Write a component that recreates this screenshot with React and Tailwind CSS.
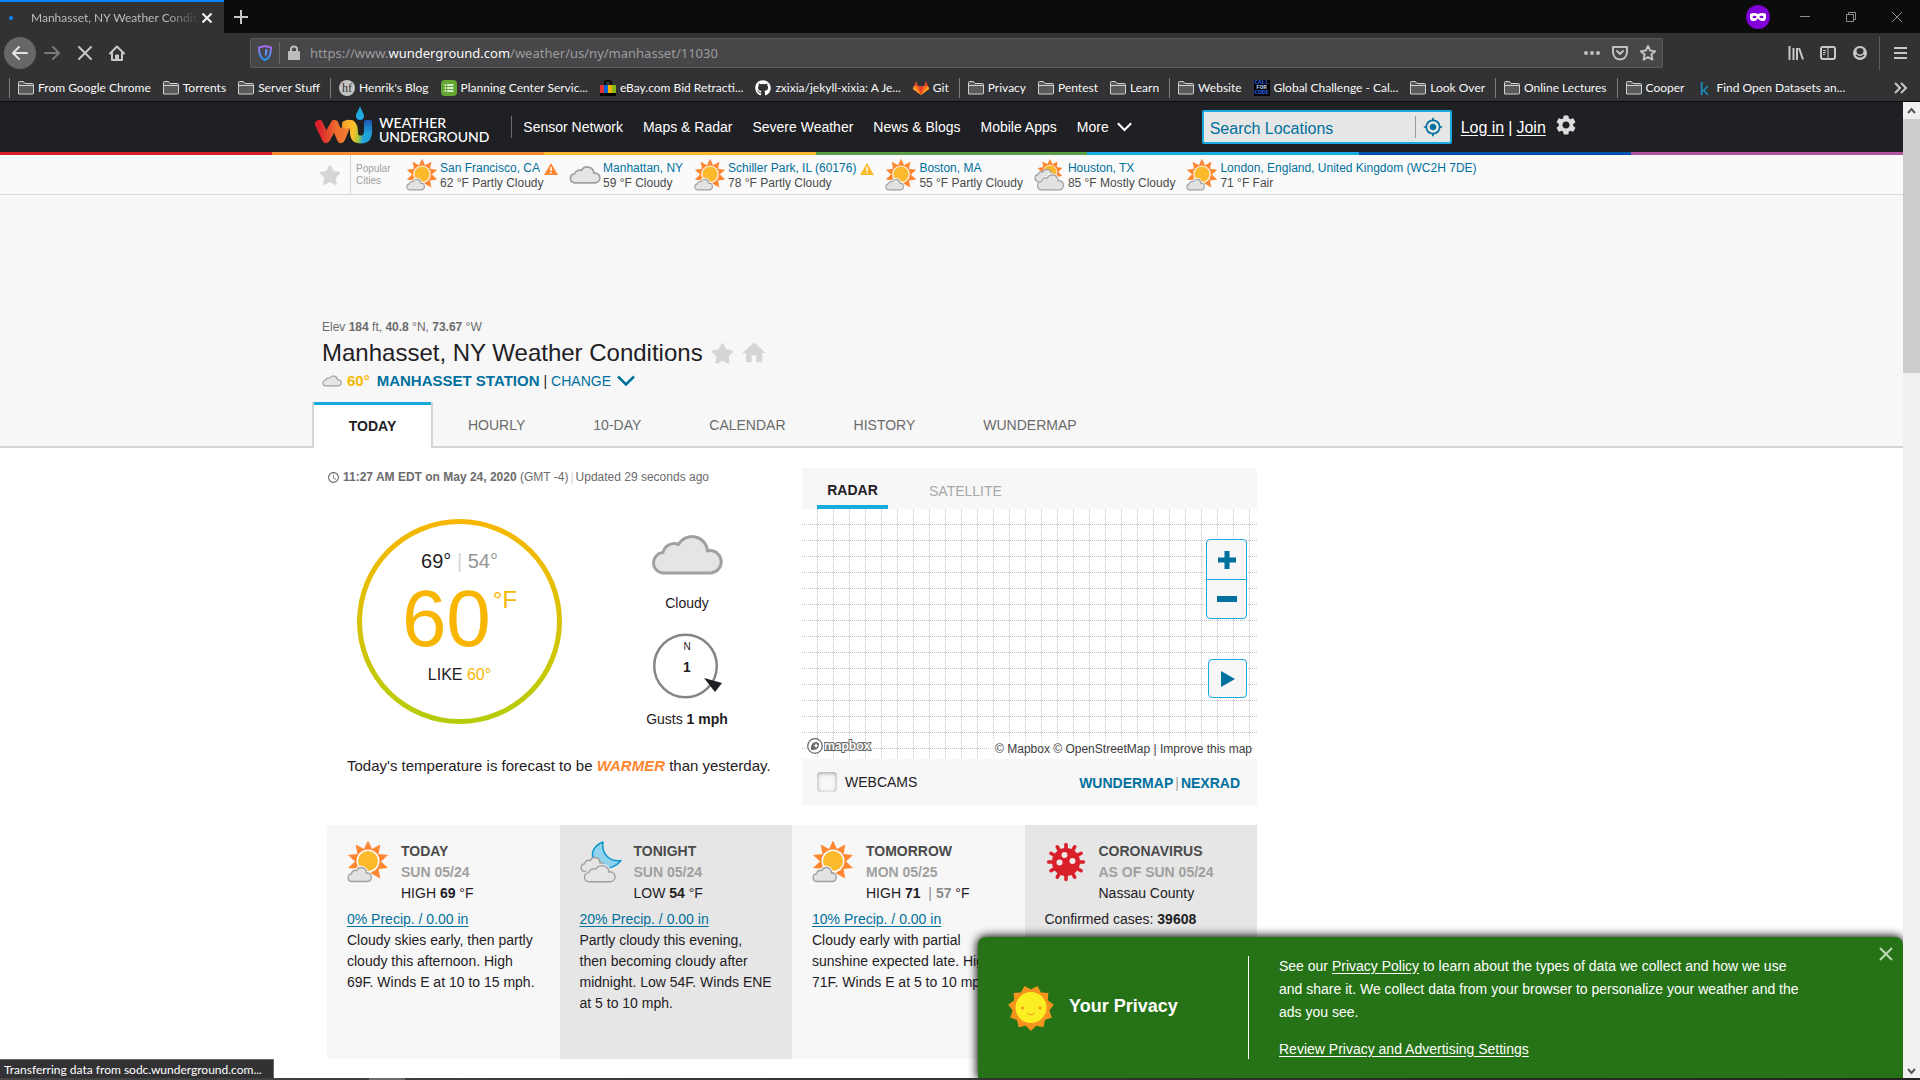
import React from "react";
import { FaGithub, FaStar } from "react-icons/fa6";
import { MdSettings, MdMyLocation, MdAccessTime, MdHome } from "react-icons/md";

function starPoints(cx, cy, n, outer, inner) {
  return Array.from({ length: n * 2 }, (_, i) => {
    const r = i % 2 ? inner : outer;
    const a = (Math.PI * i) / n;
    return `${(cx + r * Math.sin(a)).toFixed(1)},${(cy - r * Math.cos(a)).toFixed(1)}`;
  }).join(" ");
}

const CLOUD =
  "M12.5 38 H61 A11.3 11.3 0 0 0 61 15.5 Q59 15.3 57.5 16 A15.5 15.5 0 0 0 28.5 9.5 A11.5 11.5 0 0 0 13 17.5 A10.3 10.3 0 0 0 12.5 38Z";

function Cloud({ className, stroke = 3 }) {
  return (
    <svg viewBox="0 0 74 40" className={className} aria-hidden="true">
      <path d={CLOUD} fill="#e5e5e5" stroke="#a0a0a0" strokeWidth={stroke} strokeLinejoin="round" />
    </svg>
  );
}

function SmallCloud({ className }) {
  return <Cloud className={className} stroke={4} />;
}

function Chevron({ className }) {
  return (
    <svg viewBox="0 0 18 12" className={className} fill="none" stroke="currentColor" strokeWidth="2.500" aria-hidden="true">
      <path d="M1 1.500 L9 9.500 L17 1.500" />
    </svg>
  );
}

function SunCloud({ className }) {
  return (
    <svg viewBox="0 0 42 42" className={className} aria-hidden="true">
      <polygon points={starPoints(21, 20.5, 10, 21, 13)} fill="#ff8732" />
      <circle cx="21" cy="20" r="11.500" fill="#fafafa" />
      <circle cx="21" cy="20" r="10" fill="#fdb92c" />
      <g transform="translate(0 26) scale(0.34 0.38)">
        <path d={CLOUD} fill="#fafafa" stroke="#fafafa" strokeWidth="10" />
        <path d={CLOUD} fill="#e2e2e2" stroke="#a0a0a0" strokeWidth="4" />
      </g>
    </svg>
  );
}

function MostlyCloudy({ className }) {
  return (
    <svg viewBox="0 0 42 42" className={className} aria-hidden="true">
      <g transform="translate(3 0)">
        <polygon points={starPoints(18, 17, 10, 17, 11)} fill="#ff8732" />
        <circle cx="18" cy="17" r="9" fill="#fdb92c" stroke="#fafafa" />
      </g>
      <g transform="translate(0 13) scale(0.4 0.43)">
        <path d={CLOUD} fill="#e2e2e2" stroke="#a0a0a0" strokeWidth="4" />
      </g>
      <g transform="translate(3 20) scale(0.5 0.54)">
        <path d={CLOUD} fill="#e2e2e2" stroke="#fafafa" strokeWidth="7" />
        <path d={CLOUD} fill="#e2e2e2" stroke="#a0a0a0" strokeWidth="3" />
      </g>
    </svg>
  );
}

function NightCloud({ className }) {
  return (
    <svg viewBox="0 0 42 42" className={className} aria-hidden="true">
      <path d="M23 1 C13 5 9 14 16 22 C22 30 34 28 41 19.500 C31 21 21 14 23 1Z" fill="#8fd3ee" stroke="#0a96cc" strokeWidth="1.500" strokeLinejoin="round" />
      <g transform="translate(0 16) scale(0.35 0.38)">
        <path d={CLOUD} fill="#e5e5e5" stroke="#a0a0a0" strokeWidth="4" />
      </g>
      <g transform="translate(3 24) scale(0.45 0.44)">
        <path d={CLOUD} fill="#e5e5e5" stroke="#e5e5e5" strokeWidth="9" />
        <path d={CLOUD} fill="#e5e5e5" stroke="#a0a0a0" strokeWidth="3" />
      </g>
    </svg>
  );
}

function Virus({ className }) {
  return (
    <svg viewBox="0 0 42 42" className={className} aria-hidden="true">
      <g stroke="#d91f2a" strokeWidth="3.600" strokeLinecap="round">
        {Array.from({ length: 12 }, (_, i) => (
          <line key={i} x1="21" y1="21" x2="21" y2="3.600" transform={`rotate(${i * 30} 21 21)`} />
        ))}
      </g>
      <circle cx="21" cy="21" r="14" fill="#d91f2a" />
      <circle cx="19.500" cy="14" r="3" fill="#f2e8e8" />
      <circle cx="14.500" cy="21.500" r="3" fill="#f2e8e8" />
      <circle cx="27.500" cy="20" r="3" fill="#f2e8e8" />
    </svg>
  );
}

function SmilingSun({ className }) {
  return (
    <svg viewBox="0 0 46 46" className={className} aria-hidden="true">
      <g transform="rotate(180 23 23)">
        <polygon points={starPoints(23, 23, 11, 23, 18.5)} fill="#f7941d" />
      </g>
      <circle cx="23" cy="22.500" r="15.500" fill="#fbee23" />
      <circle cx="14.500" cy="23" r="1.500" fill="#f7941d" />
      <circle cx="32" cy="23" r="1.500" fill="#f7941d" />
      <path d="M19 27.500 Q23 32.500 27 27.500" fill="none" stroke="#f7941d" />
    </svg>
  );
}

function Alert({ color }) {
  return (
    <svg viewBox="0 0 14 12" className="mt-0.5 h-3 w-3.5" aria-label="Alert">
      <path d="M7 0 L14 12 H0Z" fill={color} />
      <path d="M7 4 V8 M7 9 V10.500" stroke="#fff" strokeWidth="1.500" />
    </svg>
  );
}

function Logo() {
  return (
    <svg viewBox="0 0 58 38" className="h-[38px] w-[58px]" aria-hidden="true">
      <defs>
        <linearGradient id="w" gradientUnits="userSpaceOnUse" x1="0" y1="0" x2="40" y2="0">
          <stop offset="0.1" stopColor="#d9202b" />
          <stop offset="0.55" stopColor="#ef6f2f" />
          <stop offset="1" stopColor="#f3872f" />
        </linearGradient>
        <linearGradient id="u" gradientUnits="userSpaceOnUse" x1="28" y1="20" x2="55" y2="24">
          <stop offset="0" stopColor="#f6a02c" />
          <stop offset="0.4" stopColor="#fdc22c" />
          <stop offset="0.62" stopColor="#a9c53a" />
          <stop offset="0.8" stopColor="#1fa3d8" />
        </linearGradient>
        <linearGradient id="b" x1="0" y1="0" x2="0" y2="1">
          <stop offset="0" stopColor="#1d57b0" />
          <stop offset="1" stopColor="#1d9fdb" />
        </linearGradient>
      </defs>
      <path d="M4 18 L11 33 L19.500 18 L26 33 L31 21 Q32.500 17.500 36 18" fill="none" stroke="url(#w)" strokeWidth="8" strokeLinejoin="round" strokeLinecap="round" />
      <path d="M31 18.500 Q39 15.500 39 26 Q39 33.500 46 33.500 Q53 33.500 53 25" fill="none" stroke="url(#u)" strokeWidth="8" strokeLinecap="round" />
      <path d="M49 16 Q49 14 51 14 H55 Q57 14 57 16 V27 H49Z" fill="url(#b)" />
      <path d="M45 0 C46.500 5 49 7 49 10 A4 4 0 0 1 41 10 C41 7 43.500 5 45 0Z" fill="#1fabe0" />
    </svg>
  );
}

function FolderIcon() {
  return (
    <svg viewBox="0 0 16 16" className="size-4 shrink-0" fill="none" stroke="#cfcfd0" aria-hidden="true">
      <path d="M0.500 14 V2.500 Q0.500 1.500 1.500 1.500 H5.500 L7 3.500 H14.500 Q15.500 3.500 15.500 4.500 V13 Q15.500 14 14.500 14Z M0.500 5.500 H15.500" fill="#5a5a5c" />
    </svg>
  );
}

function HenrikIcon() {
  return (
    <span className="flex size-4 shrink-0 items-center justify-center rounded-full bg-[#c4c4c4] font-['Liberation_Serif',serif] text-xs leading-none text-[#333]">hf</span>
  );
}

function PlanningIcon() {
  return (
    <svg viewBox="0 0 16 16" className="size-4 shrink-0" aria-hidden="true">
      <rect width="16" height="16" rx="4" fill="#63a832" />
      <path d="M3.500 5 H5 M6 5 H12.500 M3.500 8 H5 M6 8 H12.500 M3.500 11 H5 M6 11 H12.500" stroke="#fff" strokeWidth="1.500" />
    </svg>
  );
}

function EbayIcon() {
  return (
    <svg viewBox="0 0 16 16" className="size-4 shrink-0" aria-hidden="true">
      <path d="M5 6 V3 Q5 0.500 8 0.500 Q11 0.500 11 3 V6" fill="none" stroke="#000" strokeWidth="1.500" />
      <path d="M0 5 H4 V13 H0Z" fill="#e53238" />
      <path d="M4 5 H8 V13 H4Z" fill="#0064d2" />
      <path d="M8 5 H12 V13 H8Z" fill="#f5af02" />
      <path d="M12 5 H16 V13 H12Z" fill="#86b817" />
      <path d="M0 13 H16 V16 H0Z" fill="#000" />
    </svg>
  );
}

function GithubIcon() {
  return <FaGithub className="size-4 shrink-0 text-white" />;
}

function GitlabIcon() {
  return (
    <svg viewBox="0 0 16 16" className="size-4 shrink-0" aria-hidden="true">
      <path d="M8 15 L0 9 L1 6 H15 L16 9Z" fill="#fc6d26" />
      <path d="M8 15 L5 6 H11Z" fill="#e24329" />
      <path d="M1 6 L3 1 L5 6Z M15 6 L13 1 L11 6Z" fill="#e24329" />
      <path d="M0 9 L1 6 L8 15Z M16 9 L15 6 L8 15Z" fill="#fca326" />
    </svg>
  );
}

function CallIcon() {
  return (
    <span className="flex size-4 shrink-0 flex-col items-center justify-center bg-black font-['Liberation_Mono',monospace] text-[6px] leading-[5px] font-bold text-[#2a62e0]">
      <span>CALL</span>
      <span className="text-[#b8c8e8]">FOR</span>
      <span>CODE</span>
    </span>
  );
}

function KaggleIcon() {
  return <span className="w-4 shrink-0 text-center text-lg leading-none font-medium text-[#1a8ab8]">k</span>;
}

const BOOKMARKS = [
  [[FolderIcon, "From Google Chrome"], [FolderIcon, "Torrents"], [FolderIcon, "Server Stuff"]],
  [
    [HenrikIcon, "Henrik's Blog"],
    [PlanningIcon, "Planning Center Servic..."],
    [EbayIcon, "eBay.com Bid Retracti..."],
    [GithubIcon, "zxixia/jekyll-xixia: A Je..."],
    [GitlabIcon, "Git"],
  ],
  [[FolderIcon, "Privacy"], [FolderIcon, "Pentest"], [FolderIcon, "Learn"]],
  [[FolderIcon, "Website"], [CallIcon, "Global Challenge - Cal..."], [FolderIcon, "Look Over"]],
  [[FolderIcon, "Online Lectures"]],
  [[FolderIcon, "Cooper"], [KaggleIcon, "Find Open Datasets an..."]],
];

function BrowserChrome() {
  return (
    <header className="shrink-0 font-[Lato,'Open_Sans',sans-serif] text-xs text-[#f9f9fa]">
      <div className="flex h-[33px] bg-[#0c0c0d]">
        <div className="flex w-56 items-center border-t-2 border-[#0a84ff] bg-[#323234] pr-3 pl-[9px]">
          <span className="size-1 rounded-full bg-[#0a84ff]" />
          <span className="ml-[18px] flex-1 bg-linear-to-r from-[#c4c4c6] from-80% to-[#3c3c3e] bg-clip-text whitespace-nowrap text-transparent">
            Manhasset, NY Weather Condit
          </span>
          <button aria-label="Close tab" className="ml-1">
            <svg viewBox="0 0 10 10" className="size-2.5" stroke="currentColor" strokeWidth="2"><path d="M0.500 0.500 L9.500 9.500 M9.500 0.500 L0.500 9.500" /></svg>
          </button>
        </div>
        <button aria-label="New tab" className="ml-2.5 text-[#c8c8c9]">
          <svg viewBox="0 0 14 14" className="size-3.5" stroke="currentColor" strokeWidth="2" aria-hidden="true">
            <path d="M7 0 V14 M0 7 H14" />
          </svg>
        </button>
        <div className="ml-auto flex items-center text-[#8c8c8c]">
          <svg viewBox="0 0 24 24" className="mr-3 size-6" aria-label="Private browsing">
            <circle cx="12" cy="12" r="12" fill="#8000d7" />
            <path d="M4 9 Q8 7 12 9 Q16 7 20 9 Q21 17 16 16 Q14 16 12 13.500 Q10 16 8 16 Q3 17 4 9Z" fill="#fff" />
            <ellipse cx="8.500" cy="12" rx="2" ry="1.300" fill="#8000d7" />
            <ellipse cx="15.500" cy="12" rx="2" ry="1.300" fill="#8000d7" />
          </svg>
          <button aria-label="Minimize" className="flex w-[46px] justify-center">
            <svg viewBox="0 0 10 10" className="size-2.5" stroke="currentColor"><path d="M0 4.500 H10" /></svg>
          </button>
          <button aria-label="Restore" className="flex w-[46px] justify-center">
            <svg viewBox="0 0 10 10" className="size-2.5" stroke="currentColor" fill="none"><path d="M0.500 2.500 H7.500 V9.500 H0.500Z M2.500 2.500 V0.500 H9.500 V7.500 H7.500" /></svg>
          </button>
          <button aria-label="Close" className="flex w-[46px] justify-center">
            <svg viewBox="0 0 10 10" className="size-2.5" stroke="currentColor"><path d="M0 0 L10 10 M10 0 L0 10" /></svg>
          </button>
        </div>
      </div>

      <div className="flex h-10 items-center bg-[#323234] pr-3 pl-1">
        <button aria-label="Back" className="flex size-8 items-center justify-center rounded-full bg-[#676768]">
          <svg viewBox="0 0 16 16" className="size-4" fill="none" stroke="#e4e4e5" strokeWidth="2" strokeLinecap="round" strokeLinejoin="round"><path d="M15 8 H1.500 M7 2 L1 8 L7 14" /></svg>
        </button>
        <button aria-label="Forward" className="ml-2">
          <svg viewBox="0 0 16 16" className="size-4" fill="none" stroke="#7a7a7c" strokeWidth="2" strokeLinecap="round" strokeLinejoin="round"><path d="M1 8 H14.500 M9 2 L15 8 L9 14" /></svg>
        </button>
        <button aria-label="Stop" className="ml-[17px]">
          <svg viewBox="0 0 16 16" className="size-4" stroke="#c8c8c9" strokeWidth="2" strokeLinecap="round"><path d="M2 2 L14 14 M14 2 L2 14" /></svg>
        </button>
        <button aria-label="Home" className="ml-4">
          <svg viewBox="0 0 16 16" className="size-4" fill="none" stroke="#c8c8c9" strokeWidth="2" strokeLinejoin="round" strokeLinecap="round"><path d="M1 8.500 L8 1.500 L15 8.500 M3 8 V15 H13 V8 M7 15 V10.500 H9 V15" /></svg>
        </button>
        <div className="ml-[125px] flex h-[30px] flex-1 items-center rounded-xs border border-[#5a5a5c] bg-[#474749] pr-1.5 pl-[7px]">
          <svg viewBox="0 0 14 16" className="h-4 w-3.5" fill="none" aria-label="Tracking protection">
            <defs>
              <linearGradient id="shield" x1="0" y1="0" x2="0" y2="1">
                <stop offset="0" stopColor="#a96bf0" />
                <stop offset="1" stopColor="#1f9bf5" />
              </linearGradient>
            </defs>
            <path d="M7 1 L13 2.500 Q13 13 7 15 Q1 13 1 2.500Z" stroke="url(#shield)" strokeWidth="2" />
            <path d="M7 4 L9.500 4.500 Q9.500 10 7 12Z" fill="#5b8cf5" />
          </svg>
          <span className="ml-[7px] h-[22px] w-px bg-[#6a6a6c]" />
          <svg viewBox="0 0 12 16" className="ml-2 h-4 w-3" aria-label="Secure"><rect x="0" y="6" width="12" height="9" rx="1" fill="#bdbdbe" /><path d="M3 7 V4 Q3 1.500 6 1.500 Q9 1.500 9 4 V7" fill="none" stroke="#bdbdbe" strokeWidth="2" /></svg>
          <div role="textbox" aria-label="Address" className="ml-2.5 pt-0.5 font-['Noto_Sans',sans-serif] text-[13px] text-[#9c9c9e]">
            https://www.<span className="text-[#f9f9fa]">wunderground.com</span>/weather/us/ny/manhasset/11030
          </div>
          <div className="ml-auto flex items-center gap-3 text-[#c0c0c1]">
            <svg viewBox="0 0 16 16" className="size-4" fill="currentColor"><circle cx="2" cy="8" r="2" /><circle cx="8" cy="8" r="2" /><circle cx="14" cy="8" r="2" /></svg>
            <svg viewBox="0 0 16 16" className="size-4" fill="none" stroke="currentColor" strokeWidth="2" strokeLinejoin="round" strokeLinecap="round"><path d="M1 2 H15 V7 Q14.500 14 8 14.500 Q1.500 14 1 7Z M5 6 L8 9 L11 6" /></svg>
            <svg viewBox="0 0 16 16" className="size-4" fill="none" stroke="currentColor" strokeWidth="2" strokeLinejoin="round"><polygon points={starPoints(8, 8.5, 5, 7.5, 3.6)} /></svg>
          </div>
        </div>
        <div className="ml-[125px] flex items-center text-[#c8c8c9]">
          <svg viewBox="0 0 16 16" className="size-4" fill="none" stroke="currentColor" strokeWidth="2"><path d="M1.500 1 V15 M5.500 3 V15 M9 3 V15 M11 3 L15 14.500" /></svg>
          <svg viewBox="0 0 16 16" className="ml-4 size-4" fill="none" stroke="currentColor"><rect x="1" y="2" width="14" height="12" rx="2" strokeWidth="2" /><path d="M8 2 V14 M3 5.500 H6 M3 7.500 H6 M3 9.500 H5" /></svg>
          <svg viewBox="0 0 16 16" className="ml-4 size-4" aria-label="Account">
            <circle cx="8" cy="8" r="7" fill="currentColor" />
            <path d="M4.500 5.500 Q4.500 3 8 3 Q11.500 3 11.500 5.500 Q11.500 9.500 8 9.500 Q4.500 9.500 4.500 5.500Z" fill="#323234" />
            <path d="M4 10 Q8 13.500 12 10" fill="none" stroke="#323234" strokeWidth="1.500" />
          </svg>
          <span className="ml-[11px] h-[34px] w-px bg-[#5c5c5e]" />
          <svg viewBox="0 0 14 14" className="ml-3.5 size-3.5" stroke="currentColor" strokeWidth="2"><path d="M0 2 H13 M0 7 H13 M0 12 H13" /></svg>
        </div>
      </div>

      <nav aria-label="Bookmarks" className="flex h-[29px] items-center border-b border-[#0c0c0d] bg-[#323234] pt-px pr-3 pl-[9px]">
        {BOOKMARKS.map((group, g) => (
          <div key={g} className="flex shrink-0 items-center gap-3 pr-2.5">
            <span className="-mr-1 h-5 w-px bg-[#7c7c7e]" />
            {group.map(([Icon, label]) => (
              <a key={label} href="#" className="flex items-center gap-1 whitespace-nowrap">
                <Icon />
                {label}
              </a>
            ))}
          </div>
        ))}
        <svg viewBox="0 0 14 12" className="ml-auto h-3 w-3.5" fill="none" stroke="#c8c8c9" strokeWidth="2"><path d="M1 1 L6 6 L1 11 M7 1 L12 6 L7 11" /></svg>
      </nav>
    </header>
  );
}

function Rainbow() {
  return (
    <div className="flex h-[3px]">
      <span className="flex-1 bg-[#d91f2a]" />
      <span className="flex-1 bg-[#fb8a32]" />
      <span className="flex-1 bg-[#fdb92c]" />
      <span className="flex-1 bg-[#5b9f49]" />
      <span className="flex-1 bg-[#19abe0]" />
      <span className="flex-1 bg-[#0053ae]" />
      <span className="flex-1 bg-[#b1539e]" />
    </div>
  );
}

function SiteHeader() {
  return (
    <>
      <div className="bg-[#1f2024] text-sm text-white">
        <div className="mx-auto flex h-[50px] max-w-[1275px] items-center">
          <a href="#" className="flex items-end gap-1.5 pb-1 pl-px">
            <Logo />
            <span className="font-[Lato,sans-serif] text-sm leading-[14px] font-medium">
              WEATHER
              <br />
              UNDERGROUND
            </span>
          </a>
          <span className="ml-[22px] h-[22px] w-px bg-[#6d6e71]" />
          <nav className="ml-[11px] flex items-center gap-5">
            {["Sensor Network", "Maps & Radar", "Severe Weather", "News & Blogs", "Mobile Apps"].map((t) => (
              <a key={t} href="#" className="whitespace-nowrap">{t}</a>
            ))}
            <button className="flex items-center gap-2">
              More
              <Chevron className="h-2.5 w-[15px]" />
            </button>
          </nav>
          <form className="ml-[70px] flex h-[34px] w-[250px] items-center rounded-xs border-2 border-[#19abe0] bg-[#e6e6e6] text-[#00709e]">
            <input aria-label="Search Locations" placeholder="Search Locations" className="min-w-0 flex-1 pt-1 pl-1.5 text-base outline-none placeholder:text-[#00709e]" />
            <span className="h-[22px] w-px bg-[#9a9a9a]" />
            <button type="button" aria-label="Use my location" className="mx-[7px]">
              <MdMyLocation className="size-5" />
            </button>
          </form>
          <div className="ml-[9px] flex items-center gap-1 pt-px text-base">
            <a href="#" className="underline underline-offset-2">Log in</a>|
            <a href="#" className="underline underline-offset-2">Join</a>
          </div>
          <button aria-label="Settings" className="ml-2 pb-1 text-[#dcdcdc]">
            <MdSettings className="size-6" />
          </button>
        </div>
      </div>
      <Rainbow />
    </>
  );
}

const CITIES = [
  { name: "San Francisco, CA", cond: "62 °F Partly Cloudy", icon: SunCloud, alert: "#ff8732" },
  { name: "Manhattan, NY", cond: "59 °F Cloudy", icon: SmallCloud },
  { name: "Schiller Park, IL (60176)", cond: "78 °F Partly Cloudy", icon: SunCloud, alert: "#fdb92c" },
  { name: "Boston, MA", cond: "55 °F Partly Cloudy", icon: SunCloud },
  { name: "Houston, TX", cond: "85 °F Mostly Cloudy", icon: MostlyCloudy },
  { name: "London, England, United Kingdom (WC2H 7DE)", cond: "71 °F Fair", icon: SunCloud },
];

function PopularCities() {
  return (
    <div className="border-b border-[#d9d9d9] bg-[#fafafa]">
      <div className="mx-auto flex h-[39px] max-w-[1275px] items-center">
        <FaStar className="mx-[5px] size-[22px] text-[#d5d5d5]" />
        <div className="ml-1 flex h-full w-[50px] items-center border-l border-[#d5d5d5] pl-[5px] text-[10px] leading-3 text-[#a0a0a0]">
          Popular
          <br />
          Cities
        </div>
        <ul className="ml-1.5 flex gap-[11px]">
          {CITIES.map(({ name, cond, icon: Icon, alert }) => (
            <li key={name} className="flex items-center gap-0.5">
              <Icon className="size-8" />
              <div className="pt-0.5 text-xs leading-[15px] whitespace-nowrap text-[#4a4a4a]">
                <div className="flex gap-1">
                  <a href="#" className="text-[#00709e]">{name}</a>
                  {alert && <Alert color={alert} />}
                </div>
                {cond}
              </div>
            </li>
          ))}
        </ul>
      </div>
    </div>
  );
}

function LocationHeader() {
  return (
    <div className="bg-[#f7f7f7] pt-[123px]">
      <div className="mx-auto max-w-[1275px] pl-2">
        <p className="text-xs leading-[18px] text-[#6b6b6b]">
          Elev <b>184</b> ft, <b>40.8</b> °N, <b>73.67</b> °W
        </p>
        <h1 className="mt-px flex items-center text-2xl leading-8 text-[#1f2024]">
          Manhasset, NY Weather Conditions
          <FaStar className="ml-2 size-[23px] text-[#d5d5d5]" />
          <MdHome className="ml-1.5 size-7 text-[#d5d5d5]" />
        </h1>
        <div className="mt-0.5 flex items-center text-sm leading-5 text-[#00709e]">
          <SmallCloud className="h-3 w-5" />
          <b className="ml-[5px] text-[15px] text-[#f5b800]">60°</b>
          <a href="#" className="ml-[7px] text-[15px] font-bold">MANHASSET STATION</a>
          <span className="mx-1 text-[#1f2024]">|</span>
          <button className="flex items-center gap-1.5">
            CHANGE
            <Chevron className="h-3 w-[18px]" />
          </button>
        </div>
      </div>
      <div className="mt-[11px] flex">
        <span className="flex-1 border-b-2 border-[#d5d5d5]" />
        <nav className="flex w-full max-w-[1279px] text-sm leading-[42px] text-[#6b6b6b]">
          <a href="#" className="w-[121px] border-x-2 border-[#d5d5d5] bg-white text-center font-bold text-[#1f2024]">
            <span className="block border-t-3 border-[#19abe0]">TODAY</span>
          </a>
          <div className="flex flex-1 border-b-2 border-[#d5d5d5] pl-px">
            {["HOURLY", "10-DAY", "CALENDAR", "HISTORY", "WUNDERMAP"].map((t) => (
              <a key={t} href="#" className="px-[34px] pt-0.5">{t}</a>
            ))}
          </div>
        </nav>
        <span className="flex-1 border-b-2 border-[#d5d5d5]" />
      </div>
    </div>
  );
}

function Conditions() {
  return (
    <section className="w-[475px] shrink-0 text-sm text-[#1f2024]">
      <p className="flex items-center text-xs leading-[18px] whitespace-pre text-[#6b6b6b]">
        <MdAccessTime className="mr-[3px] size-[13px]" />
        <b>11:27 AM EDT on May 24, 2020</b> (GMT -4)<span className="mx-0.5 text-[#d5d5d5]">|</span>Updated 29 seconds ago
      </p>
      <div className="mt-[33px] flex pl-[30px]">
        <div className="size-[205px] rounded-full bg-linear-to-b from-[#f8b600] to-[#b4cc08] p-[5px]">
          <div className="flex h-full flex-col items-center rounded-full bg-white pt-[25px]">
            <div className="text-xl leading-6">
              69° <span className="text-[#d5d5d5]">|</span> <span className="text-[#959595]">54°</span>
            </div>
            <div className="mt-1.5 flex gap-0.5 text-[#f8b600]">
              <span className="text-[80px] leading-[80px]">60</span>
              <span className="pt-[9px] text-2xl leading-6">°F</span>
            </div>
            <div className="mt-1.5 text-base leading-5">
              LIKE <span className="text-[#f8b600]">60°</span>
            </div>
          </div>
        </div>
        <div className="ml-[70px] flex w-[110px] flex-col items-center pt-4 leading-5">
          <Cloud className="h-10 w-[74px]" />
          <span className="mt-[18px]">Cloudy</span>
          <svg viewBox="0 0 72 68" className="mt-5 h-[68px] w-[72px]" aria-label="Wind from the southeast">
            <circle cx="34.500" cy="33" r="31.300" fill="none" stroke="#858585" strokeWidth="2.500" />
            <text x="36" y="17" textAnchor="middle" fontSize="10" fill="#1f2024">N</text>
            <text x="36" y="39" textAnchor="middle" fontSize="14" fontWeight="bold" fill="#1f2024">1</text>
            <polygon points="53,45 71,50 64,59" fill="#1f2024" />
          </svg>
          <span className="mt-2">
            Gusts <b>1 mph</b>
          </span>
        </div>
      </div>
      <p className="mt-[27px] pl-5 text-[15px] leading-5">
        Today's temperature is forecast to be <b className="text-[#ff8732] italic">WARMER</b> than yesterday.
      </p>
    </section>
  );
}

function RadarPanel() {
  return (
    <section className="flex flex-1 flex-col bg-[#f7f7f7] text-sm">
      <div className="flex h-[41px] items-stretch pl-[15px]">
        <button className="w-[71px] border-b-4 border-[#19abe0] pt-1.5 font-bold text-[#1f2024]">RADAR</button>
        <button className="ml-[41px] pt-1 text-[#a8a8a8]">SATELLITE</button>
      </div>
      <div className="relative h-[250px] bg-white">
        <svg className="absolute inset-0 size-full" shapeRendering="crispEdges" aria-hidden="true">
          <defs>
            <pattern id="grid" width="16" height="16" patternUnits="userSpaceOnUse">
              <path d="M15.500 0 V16 M0 15.500 H16" stroke="#bfc3c8" strokeDasharray="1 1" />
            </pattern>
          </defs>
          <rect width="100%" height="100%" fill="url(#grid)" />
        </svg>
        <div className="absolute top-[30px] right-2.5 flex flex-col items-end">
          <div className="flex flex-col rounded-sm border border-[#19abe0] bg-[#f7f7f7]/95">
            <button aria-label="Zoom in" className="flex h-10 w-[39px] items-center justify-center border-b border-[#19abe0]">
              <svg viewBox="0 0 18 18" className="size-[18px]" stroke="#00709e" strokeWidth="5"><path d="M9 0 V18 M0 9 H18" /></svg>
            </button>
            <button aria-label="Zoom out" className="flex h-[38px] w-[39px] items-center justify-center">
              <svg viewBox="0 0 20 6" className="h-1.5 w-5" fill="#00709e"><rect width="20" height="6" /></svg>
            </button>
          </div>
          <button aria-label="Play" className="mt-10 flex size-[39px] items-center justify-center rounded-sm border border-[#19abe0] bg-[#f7f7f7]/95">
            <svg viewBox="0 0 14 16" className="h-4 w-3.5" fill="#00709e"><path d="M0 0 L14 8 L0 16Z" /></svg>
          </button>
        </div>
        <a href="#" className="absolute bottom-[5px] left-[5px] flex items-center gap-px">
          <svg viewBox="0 0 16 16" className="size-4" aria-hidden="true">
            <circle cx="8" cy="8" r="7.300" fill="#fff" stroke="#666" strokeWidth="1.200" />
            <path d="M4 12 Q3.500 4 9 4 Q12.500 4 12 7.500 Q11 12.500 4 12Z" fill="#666" />
            <path d="M9 5 L10 7 L11.500 7.500 L10 8.500 L9 10 L8 8.500 L6.500 7.500 L8 7Z" fill="#fff" />
          </svg>
          <svg viewBox="0 0 50 16" className="h-4 w-[50px]" aria-label="mapbox">
            <text x="0" y="12" fontSize="13" fontWeight="bold" fill="#fff" stroke="#666" strokeWidth="2" paintOrder="stroke" fontFamily="Lato, sans-serif">mapbox</text>
          </svg>
        </a>
        <div className="absolute right-0 bottom-0 bg-white/50 px-[5px] text-xs leading-5 text-[#404040]">
          <a href="#">© Mapbox</a> <a href="#">© OpenStreetMap</a> | <a href="#">Improve this map</a>
        </div>
      </div>
      <div className="flex h-[46px] items-center px-[15px]">
        <label className="flex items-center gap-2 text-[#1f2024]">
          <input type="checkbox" className="size-5 appearance-none rounded-sm bg-[#f7f7f7] shadow-[inset_0_1px_4px_#999]" />
          WEBCAMS
        </label>
        <div className="ml-auto flex gap-0.5 pt-0.5 pr-0.5 font-bold text-[#00709e]">
          <a href="#">WUNDERMAP</a>
          <span className="font-normal text-[#a0a0a0]">|</span>
          <a href="#">NEXRAD</a>
        </div>
      </div>
    </section>
  );
}

function Card({ icon: Icon, title, date, temp, tone, children }) {
  return (
    <article className={tone + " flex-1 px-5 pt-4 text-sm leading-[21px] text-[#1f2024]"}>
      <div className="flex gap-3">
        <Icon className="size-[42px] shrink-0" />
        <div className="whitespace-nowrap">
          <h2 className="font-bold text-[#4a4a4a]">{title}</h2>
          <p className="font-bold text-[#a0a0a0]">{date}</p>
          <p>{temp}</p>
        </div>
      </div>
      <div className="mt-[5px]">{children}</div>
    </article>
  );
}

function Forecast() {
  return (
    <section className="mt-5 flex min-h-[234px] w-[930px]">
      <Card icon={SunCloud} tone="bg-[#f7f7f7]" title="TODAY" date="SUN 05/24" temp={<>HIGH <b>69</b> °F</>}>
        <a href="#" className="text-[#00709e] underline underline-offset-2">0% Precip. / 0.00 in</a>
        <p>Cloudy skies early, then partly cloudy this afternoon. High 69F. Winds E at 10 to 15 mph.</p>
      </Card>
      <Card icon={NightCloud} tone="bg-[#e6e6e6]" title="TONIGHT" date="SUN 05/24" temp={<>LOW <b>54</b> °F</>}>
        <a href="#" className="text-[#00709e] underline underline-offset-2">20% Precip. / 0.00 in</a>
        <p>Partly cloudy this evening, then becoming cloudy after midnight. Low 54F. Winds ENE at 5 to 10 mph.</p>
      </Card>
      <Card icon={SunCloud} tone="bg-[#f7f7f7]" title="TOMORROW" date="MON 05/25" temp={<>HIGH <b>71</b> <span className="ml-1 text-[#8c8c8c]">| <b>57</b></span> °F</>}>
        <a href="#" className="text-[#00709e] underline underline-offset-2">10% Precip. / 0.00 in</a>
        <p>Cloudy early with partial sunshine expected late. High 71F. Winds E at 5 to 10 mph.</p>
      </Card>
      <Card icon={Virus} tone="bg-[#e6e6e6]" title="CORONAVIRUS" date="AS OF SUN 05/24" temp="Nassau County">
        <p>Confirmed cases: <b>39608</b></p>
      </Card>
    </section>
  );
}

function PrivacyNotice() {
  return (
    <aside className="absolute right-0 bottom-0 flex h-[141px] w-[925px] items-center rounded-t-lg bg-[#267216] text-sm leading-[23px] text-white shadow-[0_0_10px_1px_#000]">
      <SmilingSun className="ml-[30px] size-[46px]" />
      <h2 className="ml-[15px] w-[179px] pb-1 text-lg font-bold">Your Privacy</h2>
      <div className="flex h-[103px] w-[570px] flex-col justify-center border-l border-white pl-[30px]">
        <p className="w-[532px]">
          See our <a href="#" className="underline underline-offset-2">Privacy Policy</a> to learn about the types of data we collect and how we use and share it. We collect data from your browser to personalize your weather and the ads you see.
        </p>
        <a href="#" className="mt-3.5 block underline underline-offset-2">Review Privacy and Advertising Settings</a>
      </div>
      <button aria-label="Close" className="absolute top-2.5 right-2.5 text-[#bcd8b4]">
        <svg viewBox="0 0 14 14" className="size-3.5" stroke="currentColor" strokeWidth="2"><path d="M1 1 L13 13 M13 1 L1 13" /></svg>
      </button>
    </aside>
  );
}

function Scrollbar() {
  return (
    <div className="flex w-[17px] shrink-0 flex-col items-center bg-[#f0f0f0]" aria-hidden="true">
      <svg viewBox="0 0 17 17" className="size-[17px]" fill="none" stroke="#555" strokeWidth="2"><path d="M5 11 L8.500 7 L12 11" /></svg>
      <span className="h-[26%] w-full bg-[#cdcdcd]" />
      <svg viewBox="0 0 17 17" className="mt-auto size-[17px]" fill="none" stroke="#555" strokeWidth="2"><path d="M5 8 L8.500 12 L12 8" /></svg>
    </div>
  );
}

export default function App() {
  return (
    <div className="flex h-screen flex-col overflow-hidden bg-[#3e3f40] font-['Liberation_Sans',Arial,sans-serif]">
      <BrowserChrome />
      <div className="relative flex min-h-0 flex-1">
        <div className="relative min-w-0 flex-1 overflow-hidden bg-white">
          <SiteHeader />
          <PopularCities />
          <LocationHeader />
          <main className="mx-auto max-w-[1275px] pt-5 pl-[13px]">
            <div className="flex w-[930px]">
              <Conditions />
              <RadarPanel />
            </div>
            <Forecast />
          </main>
          <PrivacyNotice />
        </div>
        <Scrollbar />
        <div role="status" className="absolute bottom-0 left-0 w-[274px] border-t border-r border-[#6a6a6a] bg-[#323234] pt-px pl-1 font-[Lato,sans-serif] text-xs leading-[17px] text-white">
          Transferring data from sodc.wunderground.com...
        </div>
      </div>
      <div className="flex h-0.5 shrink-0 bg-linear-to-r from-[#454545] to-[#222]">
        <span className="ml-[369px] w-9 bg-[#6a6a6a]" />
      </div>
    </div>
  );
}
